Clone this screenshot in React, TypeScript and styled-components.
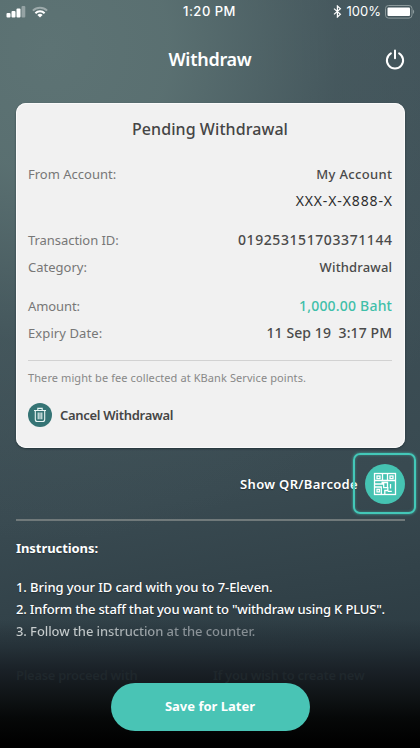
import React from "react";
import styled, { createGlobalStyle, css } from "styled-components";

const Global = createGlobalStyle`
  * { box-sizing: border-box; }
  body { margin: 0; background: #000; }
`;

const Screen = styled.main`
  width: 420px;
  height: 748px;
  overflow: hidden;
  display: flex;
  flex-direction: column;
  font-family: "Noto Sans", sans-serif;
  font-size: 13px;
  color: #fff;
  background:
    linear-gradient(180deg, transparent 620px, rgba(29, 38, 45, 0.6) 648px, #1a2127 670px, #12171a 690px, #060808 718px, #000 744px),
    radial-gradient(ellipse 480px 490px at 50px 50px, rgba(93, 115, 116, 1) 0%, rgba(91, 113, 114, 0.95) 25%, rgba(75, 94, 98, 0.5) 60%, rgba(56, 73, 80, 0) 100%),
    linear-gradient(172deg, #42545b 0%, #3d4f56 40%, #394a51 65%, #2b3a41 90%);
`;

const StatusBar = styled.header`
  height: 23px;
  flex: none;
  display: grid;
  grid-template-columns: 1fr auto 1fr;
  align-items: center;
  padding: 0 5px 0 6px;
  font: 500 13px/23px Inter, sans-serif;
`;

const StatusGroup = styled.div<{ $end?: boolean }>`
  display: flex;
  align-items: center;
  gap: ${(p) => (p.$end ? "4px" : "6px")};
  justify-content: ${(p) => (p.$end ? "flex-end" : "flex-start")};
`;

const Clock = styled.span`
  letter-spacing: 0.5px;
  margin-right: 2px;
`;

const Percent = styled.span`
  font-weight: 400;
  margin-left: 1px;
`;

const TitleBar = styled.div`
  height: 72px;
  flex: none;
  display: grid;
  grid-template-columns: 1fr auto 1fr;
  align-items: center;
  padding-right: 15px;
`;

const PageTitle = styled.h1`
  grid-column: 2;
  margin: 0 0 0 15px;
  font-size: 18px;
  font-weight: 600;
  letter-spacing: -0.28px;
`;

const IconButton = styled.button`
  justify-self: end;
  display: flex;
  padding: 0;
  border: 0;
  background: none;
  color: #fff;
`;

const Card = styled.section`
  flex: none;
  height: 345px;
  margin: 8px 15px 0 16px;
  padding: 14px 13px 0 12px;
  border-radius: 10px;
  background: #f1f1f1;
  box-shadow: 0 1px 2px rgba(15, 30, 34, 0.55), inset 0 0 0 1px #fafafa;
  color: #454545;
`;

const CardTitle = styled.h2`
  margin: 0 0 19px;
  line-height: 24px;
  text-align: center;
  font-size: 16px;
  font-weight: 500;
  letter-spacing: 0.07px;
`;

const Details = styled.dl`
  margin: 0;
  display: flex;
  flex-direction: column;
  gap: 12px;
`;

const DetailGroup = styled.div`
  display: grid;
`;

const Detail = styled.div`
  height: 27px;
  display: flex;
  align-items: center;
  justify-content: space-between;
`;

const Label = styled.dt<{ $ls?: number }>`
  color: #777;
  letter-spacing: ${(p) => p.$ls ?? 0}px;
`;

type Tone = "normal" | "dark" | "accent";
const tones = {
  normal: css`color: #4a4a4a; font-weight: 500;`,
  dark: css`color: #2d2d2d; font-weight: 400;`,
  accent: css`color: #3fbfa9; font-weight: 500;`,
};

const Value = styled.dd<{ $tone?: Tone; $ls?: number; $size?: number }>`
  margin: 0 0 0 auto;
  white-space: pre;
  font-size: ${(p) => p.$size ?? 13}px;
  ${(p) => tones[p.$tone ?? "normal"]}
  letter-spacing: ${(p) => p.$ls ?? 0}px;
  margin-right: ${(p) => -(p.$ls ?? 0)}px;
`;

const Note = styled.p`
  margin: 14px 0 0;
  padding-top: 8px;
  border-top: 1px solid #d2d2d2;
  line-height: 18px;
  font-size: 11px;
  letter-spacing: 0.09px;
  color: #888;
`;

const CancelAction = styled.button`
  display: flex;
  align-items: center;
  gap: 8px;
  margin-top: 16px;
  padding: 0;
  border: 0;
  background: none;
  font: 600 13px "Noto Sans", sans-serif;
  letter-spacing: -0.3px;
  color: #454545;
`;

const CancelIcon = styled.span`
  width: 24px;
  height: 24px;
  border-radius: 50%;
  display: grid;
  place-items: center;
  background: #357475;
`;

const QrRow = styled.div`
  flex: none;
  position: relative;
  height: 73px;
  margin: 0 15px 0 16px;
  border-bottom: 2px solid #70797a;
  display: flex;
  align-items: center;
  justify-content: flex-end;
  gap: 7px;
  font-weight: 600;
  letter-spacing: 0.33px;
  text-shadow: 0 1px 1px rgba(0, 0, 0, 0.4);
`;

const QrButton = styled.button`
  width: 40px;
  height: 40px;
  padding: 0;
  border: 0;
  border-radius: 50%;
  display: grid;
  place-items: center;
  background: #45c3b2;
`;

const Highlight = styled.span`
  position: absolute;
  right: -11px;
  top: 5px;
  width: 63px;
  height: 61px;
  border: 2px solid #43c8b8;
  border-radius: 7px;
  box-shadow: 0 0 3px rgba(67, 200, 184, 0.75), inset 0 0 3px rgba(67, 200, 184, 0.5);
`;

const Instructions = styled.section`
  flex: none;
  height: 162px;
  padding: 16px 16px 0;
  text-shadow: 0 1px 1px rgba(0, 0, 0, 0.3);
`;

const SectionTitle = styled.h3`
  margin: 0 0 17px;
  font-size: 13px;
  font-weight: 700;
  line-height: 22px;
  letter-spacing: -0.07px;
`;

const Step = styled.p<{ $ls: number; $fading?: boolean }>`
  margin: 0;
  line-height: 22px;
  font-weight: 500;
  white-space: nowrap;
  letter-spacing: ${(p) => p.$ls}px;
  ${(p) =>
    p.$fading &&
    css`
      width: max-content;
      text-shadow: none;
      color: transparent;
      background: linear-gradient(90deg, #c9cecf, #c2c8c9 30%, #8d959a 65%, #858d92);
      background-clip: text;
    `}
`;

const Hint = styled.p`
  margin: 22px 0 0;
  display: grid;
  grid-template-columns: 197px auto;
  line-height: 22px;
  font-weight: 600;
  letter-spacing: -0.3px;
  color: #1f272c;
  text-shadow: none;
`;

const SaveButton = styled.button`
  flex: none;
  align-self: center;
  width: 199px;
  height: 48px;
  border: 0;
  padding: 0 0 2px;
  border-radius: 24px;
  background: #49c4b5;
  color: #fff;
  font: 700 13px "Noto Sans", sans-serif;
`;

const SignalIcon = () => (
  <svg width="20" height="12" viewBox="0 0 20 12" fill="#fff">
    <rect x="0.5" y="7" width="4" height="4.5" rx="1" />
    <rect x="5.5" y="5" width="4" height="6.5" rx="1" />
    <rect x="10.5" y="2.5" width="4" height="9" rx="1" />
    <rect x="15.5" y="0" width="3.8" height="11.5" rx="1" opacity="0.35" />
  </svg>
);

const WifiIcon = () => (
  <svg width="16" height="12" viewBox="0 0 16 12" fill="none" strokeWidth="2">
    <path d="M.9 4.6a10 10 0 0 1 14.2 0" stroke="#fff" opacity="0.4" />
    <path d="M3.4 7.2a6.6 6.6 0 0 1 9.2 0" stroke="#fff" />
    <path d="M8 11.5 5.4 9a3.7 3.7 0 0 1 5.2 0Z" fill="#fff" />
  </svg>
);

const BluetoothIcon = () => (
  <svg width="9" height="13" viewBox="0 0 9 13" fill="none" stroke="#fff" strokeWidth="1.2">
    <path d="M1 3.6 7.4 9.2 4.4 12V1L7.4 3.8 1 9.4" />
  </svg>
);

const BatteryIcon = () => (
  <svg width="30" height="14" viewBox="0 0 30 14">
    <rect x="0.5" y="0.5" width="26.5" height="12.6" rx="3" fill="none" stroke="#8b999b" />
    <rect x="2.5" y="2.5" width="22.5" height="8.6" rx="1" fill="#fff" />
    <path d="M28 4.6c1.6.7 1.6 3.7 0 4.4Z" fill="#8b999b" />
  </svg>
);

const PowerIcon = () => (
  <svg width="20" height="21" viewBox="0 0 20 21" fill="none" stroke="#fff" strokeWidth="2" strokeLinecap="round">
    <path d="M10 1.6v7.6M5.9 4.4a8.1 8.1 0 1 0 8.2 0" />
  </svg>
);

const TrashIcon = () => (
  <svg width="14" height="16" viewBox="0 0 14 16" fill="none" stroke="#e9f5f4" strokeWidth="1.1">
    <path d="M1 3.5h12M4.8 3.3V1.4h4.4v1.9M2.3 3.8v8.7a2 2 0 0 0 2 2h5.4a2 2 0 0 0 2-2V3.8M5.2 5.5v6.7M7 5.5v6.7M8.8 5.5v6.7" />
  </svg>
);

const QrIcon = () => (
  <svg width="24" height="24" viewBox="0 0 24 24" fill="none" stroke="#fff" strokeWidth="1.3">
    <rect x="1.5" y="1.5" width="21" height="21" />
    <path d="M9.5 1.5v7h-8M14.5 1.5v7h8M1.5 12h9.2v4.2M1.5 15h6.8v7.5M11.8 22.5v-4h3v-2.8h-4M8.5 10.5h6V15M17.5 12v4.5M14.8 19.4h4M10 8.5h4.5" />
    <rect x="4" y="4" width="3" height="2.6" />
    <rect x="17" y="4" width="3" height="2.6" />
    <rect x="4" y="17.3" width="2.4" height="2.6" />
  </svg>
);

export default function App() {
  return (
    <>
      <Global />
      <Screen>
        <StatusBar>
          <StatusGroup>
            <SignalIcon />
            <WifiIcon />
          </StatusGroup>
          <Clock>1:20 PM</Clock>
          <StatusGroup $end>
            <BluetoothIcon />
            <Percent>100%</Percent>
            <BatteryIcon />
          </StatusGroup>
        </StatusBar>
        <TitleBar>
          <PageTitle>Withdraw</PageTitle>
          <IconButton aria-label="Log out">
            <PowerIcon />
          </IconButton>
        </TitleBar>
        <Card>
          <CardTitle>Pending Withdrawal</CardTitle>
          <Details>
            <DetailGroup>
              <Detail>
                <Label>From Account:</Label>
                <Value $ls={0.33}>My Account</Value>
              </Detail>
              <Detail>
                <Value $tone="dark" $size={14} $ls={0.87}>XXX-X-X888-X</Value>
              </Detail>
            </DetailGroup>
            <DetailGroup>
              <Detail>
                <Label $ls={-0.05}>Transaction ID:</Label>
                <Value $size={14} $ls={0.58}>019253151703371144</Value>
              </Detail>
              <Detail>
                <Label>Category:</Label>
                <Value $ls={0.15}>Withdrawal</Value>
              </Detail>
            </DetailGroup>
            <DetailGroup>
              <Detail>
                <Label $ls={-0.1}>Amount:</Label>
                <Value $tone="accent" $size={14} $ls={0.2}>1,000.00 Baht</Value>
              </Detail>
              <Detail>
                <Label $ls={0.1}>Expiry Date:</Label>
                <Value $size={14} $ls={0.1}>{"11 Sep 19  3:17 PM"}</Value>
              </Detail>
            </DetailGroup>
          </Details>
          <Note>There might be fee collected at KBank Service points.</Note>
          <CancelAction>
            <CancelIcon>
              <TrashIcon />
            </CancelIcon>
            Cancel Withdrawal
          </CancelAction>
        </Card>
        <QrRow>
          Show QR/Barcode
          <QrButton aria-label="Show QR code">
            <QrIcon />
          </QrButton>
          <Highlight />
        </QrRow>
        <Instructions>
          <SectionTitle>Instructions:</SectionTitle>
          <Step $ls={-0.08}>1. Bring your ID card with you to 7-Eleven.</Step>
          <Step $ls={-0.17}>2. Inform the staff that you want to "withdraw using K PLUS".</Step>
          <Step $ls={-0.08} $fading>3. Follow the instruction at the counter.</Step>
          <Hint>
            <span>Please proceed with</span>
            <span>If you wish to create new</span>
          </Hint>
        </Instructions>
        <SaveButton>Save for Later</SaveButton>
      </Screen>
    </>
  );
}
